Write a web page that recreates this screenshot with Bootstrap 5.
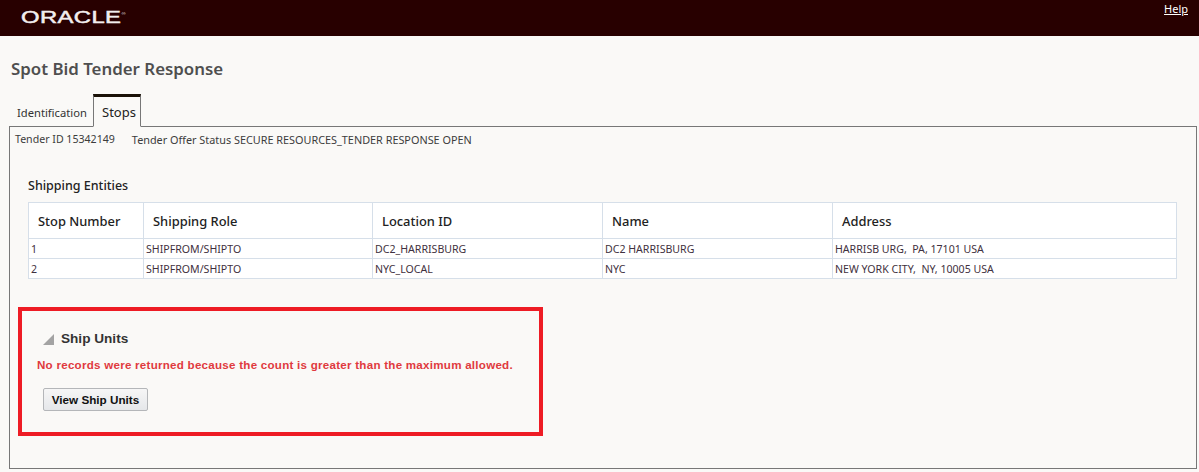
<!DOCTYPE html>
<html lang="en"><head><meta charset="utf-8"><title>Spot Bid Tender Response</title>
<link rel="stylesheet" href="https://cdn.jsdelivr.net/npm/bootstrap@5.3.0/dist/css/bootstrap.min.css">
<style>
html,body{height:472px;overflow:hidden}
body{background:#faf9f7;font-family:"Noto Sans","Open Sans",sans-serif;color:#333;font-size:10.5px;line-height:1.3}
.topbar{height:36px;background:#280000;padding:0 11px 0 21px}
.logo{font-family:"Liberation Sans",sans-serif;font-size:17px;font-weight:400;-webkit-text-stroke:.5px #f2eeee;color:#f2eeee;letter-spacing:.3px;line-height:1;transform:scaleX(1.4);transform-origin:left center;margin-top:9px}
.logo sup{font-size:4px;top:-8px;font-weight:400;-webkit-text-stroke:0}
.helplink{color:#fff;font-size:11px;margin-top:2px}
.pagetitle{font-size:16.85px;font-weight:600;color:#4f4f4f;margin:21px 0 0 11px;height:37px;line-height:23px}
.tabrow{height:33px;margin-left:9px;margin-bottom:-1px;position:relative;z-index:1}
.tabitem{font-size:11.2px;padding:12px 0 0 8px;color:#333;width:84px}
.tabitem-on{border:1px solid #777;border-top:3px solid #1a1208;border-bottom:1px solid #faf9f7;background:#faf9f7;font-size:13px;padding:7px 0 0 8px;color:#222;width:48px}
.panel{margin:0 2px 0 9px;height:343px;border:1px solid #777;padding:5px 5px 0}
.statusline{height:15px;color:#3c3c3c;gap:17px;line-height:15px}
.statusline span:first-child{font-size:10.6px}
.statusline span:last-child{font-size:10.85px}
.subhead{font-size:12.5px;font-weight:500;color:#222;margin:30px 0 0 13px;height:25px;line-height:17px}
.grid-wrap{margin-left:13px;width:1148px;border-collapse:collapse;table-layout:fixed;background:#fff}
.grid-wrap th,.grid-wrap td{border:1px solid #d6dfe9;font-weight:400;padding:0 2px;vertical-align:middle}
.grid-wrap th{font-size:12.9px;height:36px;padding:1px 0 0 9px;color:#222;font-weight:500}
.grid-wrap td{font-size:10.6px;height:20px;color:#3f3140;padding-top:2px}
.redbox{margin:28px 0 0 3px;width:525px;height:129px;border:4px solid #ee1c25;padding:19px 0 0 15px;font-family:"Liberation Sans",sans-serif}
.unitsrow{font-size:13.6px;font-weight:700;color:#333;gap:7px;height:20px;margin-left:6px}
.tri{width:11px;height:11px;margin-top:4px}
.errtext{font-size:11.6px;font-weight:700;color:#e03a3e;margin-top:7px;height:15px;letter-spacing:.25px;white-space:nowrap}
.viewbtn{font-family:"Liberation Sans",sans-serif;margin:16px 0 0 6px;width:105px;height:23px;padding:0;font-size:11.7px;font-weight:700;color:#111;background:linear-gradient(#f6f6f6,#e5e7ea);border:1px solid #b4b6b9;border-radius:2px}
</style></head>
<body>
<header class="topbar d-flex justify-content-between align-items-start">
  <div class="logo">ORACLE<sup>®</sup></div>
  <a href="#" class="helplink">Help</a>
</header>
<h1 class="pagetitle">Spot Bid Tender Response</h1>
<div class="tabrow d-flex">
  <div class="tabitem">Identification</div>
  <div class="tabitem-on">Stops</div>
</div>
<div class="panel">
  <div class="statusline d-flex"><span>Tender ID 15342149</span><span>Tender Offer Status SECURE RESOURCES_TENDER RESPONSE OPEN</span></div>
  <div class="subhead">Shipping Entities</div>
  <table class="grid-wrap">
    <colgroup><col style="width:115px"><col style="width:229px"><col style="width:230px"><col style="width:230px"><col style="width:344px"></colgroup>
    <thead><tr><th>Stop Number</th><th>Shipping Role</th><th>Location ID</th><th>Name</th><th>Address</th></tr></thead>
    <tbody>
      <tr><td>1</td><td>SHIPFROM/SHIPTO</td><td>DC2_HARRISBURG</td><td>DC2 HARRISBURG</td><td>HARRISB URG,&nbsp; PA, 17101 USA</td></tr>
      <tr><td>2</td><td>SHIPFROM/SHIPTO</td><td>NYC_LOCAL</td><td>NYC</td><td>NEW YORK CITY,&nbsp; NY, 10005 USA</td></tr>
    </tbody>
  </table>
  <section class="redbox">
    <div class="unitsrow d-flex"><svg class="tri" viewBox="0 0 11 11"><path d="M11 0V11H0Z" fill="#a3a3a3"/></svg><span>Ship Units</span></div>
    <div class="errtext">No records were returned because the count is greater than the maximum allowed.</div>
    <button type="button" class="btn viewbtn">View Ship Units</button>
  </section>
</div>
<script src="https://cdn.jsdelivr.net/npm/bootstrap@5.3.0/dist/js/bootstrap.bundle.min.js"></script>
</body></html>
